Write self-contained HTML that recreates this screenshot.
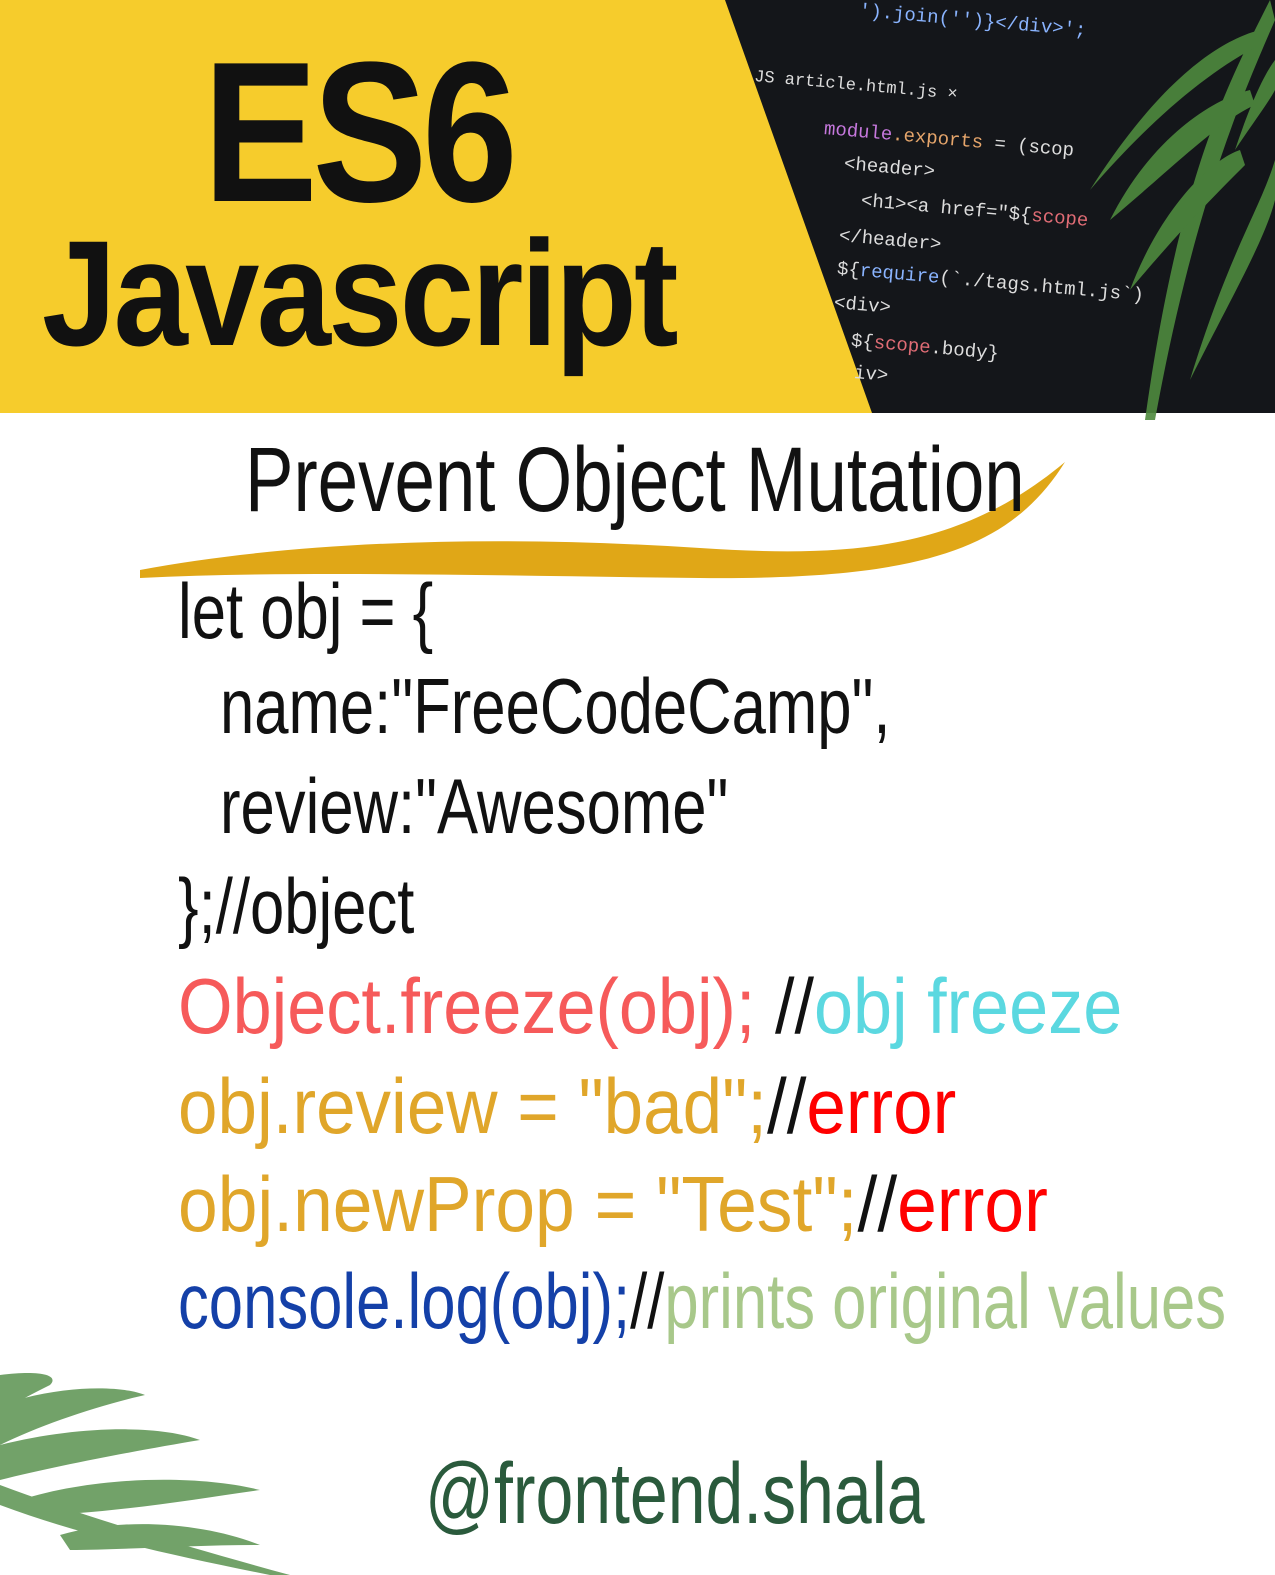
<!DOCTYPE html>
<html><head><meta charset="utf-8"><style>
html,body{margin:0;padding:0;background:#fff}
body{width:1275px;height:1575px;position:relative;overflow:hidden;font-family:"Liberation Sans",sans-serif}
.t{position:absolute;white-space:nowrap;transform-origin:0 0}
.h{font-family:"Liberation Sans Narrow","Liberation Sans",sans-serif;transform:scaleX(.79)}
.code{font-size:78px;line-height:1}
.mono{font-family:"Liberation Mono",monospace;font-size:19px;position:absolute;white-space:nowrap;transform:rotate(5deg);transform-origin:0 0}
</style></head><body>
<div style="position:absolute;left:0;top:0;width:1275px;height:413px;background:#f6cc2c"></div>
<div style="position:absolute;left:0;top:0;width:1275px;height:413px;background:#14161a;clip-path:polygon(725px 0,1275px 0,1275px 413px,872px 413px)"></div>
<div class="mono" style="left:860px;top:0;color:#8ab4ff">').join('')}&lt;/div&gt;';</div>
<div class="mono" style="left:755px;top:68px;color:#ddd;font-size:17px">JS article.html.js ×</div>
<div class="mono" style="left:825px;top:118px;color:#c678dd">module<span style="color:#e5a56b">.exports</span> <span style="color:#ddd">= (scop</span></div>
<div class="mono" style="left:845px;top:153px;color:#ddd">&lt;header&gt;</div>
<div class="mono" style="left:862px;top:190px;color:#ddd">&lt;h1&gt;&lt;a href="${<span style="color:#e06c75">scope</span></div>
<div class="mono" style="left:840px;top:225px;color:#ddd">&lt;/header&gt;</div>
<div class="mono" style="left:838px;top:258px;color:#ddd">${<span style="color:#8ab4ff">require</span>(`./tags.html.js`)</div>
<div class="mono" style="left:835px;top:292px;color:#ddd">&lt;div&gt;</div>
<div class="mono" style="left:852px;top:330px;color:#ddd">${<span style="color:#e06c75">scope</span>.body}</div>
<div class="mono" style="left:855px;top:362px;color:#ddd">iv&gt;</div>
<svg style="position:absolute;left:1030px;top:0" width="245" height="420">
<g fill="#4e8a3e" opacity=".9">
<path d="M240 0 C200 80 150 170 115 420 L125 420 C165 200 215 90 245 20Z"/>
<path d="M230 30 C190 40 130 80 60 190 C120 120 180 70 230 45Z"/>
<path d="M220 90 C180 100 120 140 80 220 C140 170 190 120 225 105Z"/>
<path d="M210 150 C180 160 130 210 100 290 C150 230 190 190 215 165Z"/>
<path d="M245 160 C230 210 200 250 160 380 C200 300 235 240 245 200Z"/>
<path d="M245 60 C230 80 215 120 205 150 C225 120 240 100 245 90Z"/>
</g></svg>
<div class="t" style="left:203px;top:18px;font-size:200px;font-weight:bold;letter-spacing:-6px;color:#111;transform:scaleX(.86)">ES6</div>
<div class="t" style="left:42px;top:207px;font-size:150px;font-weight:bold;letter-spacing:-3px;color:#111;transform:scaleX(.89)">Javascript</div>
<svg style="position:absolute;left:0;top:440px" width="1275" height="160">
<path d="M140 130 C300 100 500 95 700 108 C850 118 960 110 1065 22 C1010 110 920 140 700 138 C500 136 300 130 140 138Z" fill="#e0a717"/>
</svg>
<div class="t h" style="left:245px;top:428px;font-size:92px;color:#111">Prevent Object Mutation</div>
<div class="t h code" style="left:178px;top:572px;color:#111">let obj = {</div>
<div class="t h code" style="left:220px;top:667px;color:#111">name:"FreeCodeCamp",</div>
<div class="t h code" style="left:220px;top:767px;color:#111">review:"Awesome"</div>
<div class="t h code" style="left:178px;top:867px;color:#111">};//object</div>
<div class="t h code" style="left:178px;top:967px;color:#f65a5a;transform:scaleX(.9)">Object.freeze(obj); <span style="color:#111">//</span><span style="color:#5bd8e0">obj freeze</span></div>
<div class="t h code" style="left:178px;top:1067px;color:#e0a62a;transform:scaleX(.91)">obj.review = "bad";<span style="color:#111">//</span><span style="color:#f00">error</span></div>
<div class="t h code" style="left:178px;top:1165px;color:#e0a62a;transform:scaleX(.915)">obj.newProp = "Test";<span style="color:#111">//</span><span style="color:#f00">error</span></div>
<div class="t h code" style="left:178px;top:1262px;color:#1440a8">console.log(obj);<span style="color:#111">//</span><span style="color:#a8c88a">prints original values</span></div>
<div class="t h" style="left:425px;top:1445px;font-size:86px;color:#2a5a3c">@frontend.shala</div>
<svg style="position:absolute;left:0;top:1365px" width="300" height="210">
<g fill="#5a9250" opacity=".85">
<path d="M0 120 C80 150 180 180 290 210 L270 210 C170 190 80 170 0 140Z"/>
<path d="M0 10 C40 5 60 10 50 20 C30 30 10 40 0 50Z"/>
<path d="M0 40 C60 20 120 20 145 30 C100 40 40 60 0 80Z"/>
<path d="M0 80 C80 60 160 60 200 75 C140 85 60 100 0 115Z"/>
<path d="M20 135 C100 110 200 110 260 125 C190 135 100 150 30 150Z"/>
<path d="M60 170 C130 150 210 160 260 180 C190 180 120 185 70 185Z"/>
</g></svg>
</body></html>
